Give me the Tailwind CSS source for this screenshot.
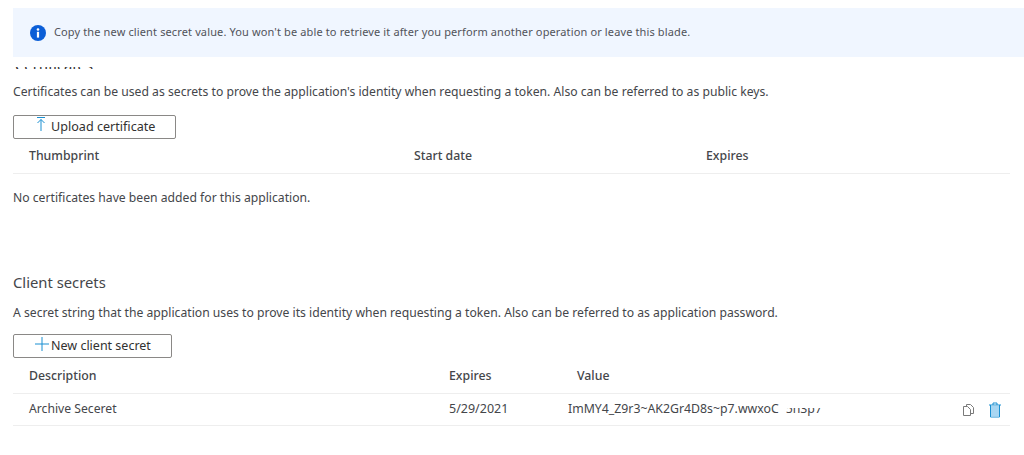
<!DOCTYPE html>
<html lang="en-us">
<head>
	<title>Certificates and secrets</title>
	<meta name="viewport" content="width=device-width, initial-scale=1">
	<script src="https://cdn.jsdelivr.net/npm/@tailwindcss/browser@4"></script>
</head>
<body>
	<div class="font-['Noto_Sans',sans-serif] h-[455px] overflow-hidden bg-white text-[12.18px] text-[#323130] pt-2 pl-[13px] pr-[14px]">

		<!-- banner -->
		<div class="-mr-[14px] h-[49px] bg-[#f0f6ff] flex items-center pl-[17px] gap-2">
			<svg class="w-4 h-4" viewBox="0 0 16 16"><circle cx="8" cy="8" r="8" fill="#0b5ed7"/><rect x="6.900" y="6.800" width="2.200" height="5.800" fill="#fff"/><circle cx="8" cy="4.500" r="1.300" fill="#fff"/></svg>
			<p class="text-[11px] text-[#50535a] tracking-[0.13px]">Copy the new client secret value. You won't be able to retrieve it after you perform another operation or leave this blade.</p>
		</div>

		<!-- certificates, scrolled under the banner -->
		<div class="mt-[10px] h-[2px] overflow-hidden flex items-end">
			<h2 class="text-[14.8px] leading-[14px] -mb-[3px] ml-[2px]">Certificates</h2>
		</div>
		<p class="mt-[14px] leading-[17px] text-[#44464a]">Certificates can be used as secrets to prove the application's identity when requesting a token. Also can be referred to as public keys.</p>
		<button class="mt-[15px] w-[163px] h-[24px] border border-[#8a8886] rounded-[2px] flex items-center pl-[21px] gap-[4px]">
			<svg class="w-3 h-[17px] -mt-[6px]" viewBox="0 0 12 17" fill="none" stroke="#1a8fd1" stroke-width="1"><path d="M2 1.500h8M6 15V3.500M2.500 7l3.500-3.500L9.500 7"/></svg>
			<span class="text-[12.6px] text-[#323130]">Upload certificate</span>
		</button>
		<div class="flex h-[35px] items-center border-b border-[#eeeeee] font-medium text-[12.3px] text-[#44464a]">
			<span class="ml-4 w-[385px]">Thumbprint</span>
			<span class="w-[292px]">Start date</span>
			<span>Expires</span>
		</div>
		<p class="mt-[15px] leading-[17px] text-[#44464a]">No certificates have been added for this application.</p>

		<!-- client secrets -->
		<h2 class="mt-[66px] text-[14.8px] leading-[20px] text-[#44464a]">Client secrets</h2>
		<p class="mt-[12px] leading-[17px] text-[#44464a]">A secret string that the application uses to prove its identity when requesting a token. Also can be referred to as application password.</p>
		<button class="mt-[13px] w-[159px] h-[24px] border border-[#8a8886] rounded-[2px] flex items-center pl-[20px] gap-[1px]">
			<svg class="w-[16px] h-[16px] -mt-[4px]" viewBox="0 0 16 16" fill="none" stroke="#1a8fd1" stroke-width="1"><path d="M8 1v14M1 8h14"/></svg>
			<span class="text-[12.5px] text-[#323130]">New client secret</span>
		</button>
		<div class="mt-px flex h-[35px] items-center border-b border-[#eeeeee] font-medium text-[12.3px] text-[#44464a]">
			<span class="ml-4 w-[420px]">Description</span>
			<span class="w-[128px]">Expires</span>
			<span>Value</span>
		</div>
		<div class="flex h-[32px] items-center border-b border-[#eeeeee] text-[#44464a]">
			<span class="ml-4 w-[420px]">Archive Seceret</span>
			<span class="w-[119px] text-[12.5px]">5/29/2021</span>
			<span class="flex items-end text-[12.3px]">ImMY4_Z9r3~AK2Gr4D8s~p7.wwxoC<span class="ml-[7px] mb-[3px] inline-block h-[8px] overflow-hidden leading-[2px]">5h3p7</span></span>
			<div class="ml-auto mr-[8px] flex items-center gap-[14px]">
				<svg class="w-[11px] h-[12px]" viewBox="0 0 11 12" fill="none" stroke="#7a7a7a"><path d="M3.500 2.500V.5h4l3 3v6h-3M.5 2.500h4l3 3v6h-7z"/></svg>
				<svg class="w-[14px] h-[16px]" viewBox="0 0 14 16" fill="none" stroke="#1a8fd1"><path d="M1 3h12M5 3V1h4v2M2.500 3v12h9V3"/><rect x="3" y="4" width="8" height="10.500" fill="#a9d6f2" stroke="none"/></svg>
			</div>
		</div>
	</div>
</body>
</html>
